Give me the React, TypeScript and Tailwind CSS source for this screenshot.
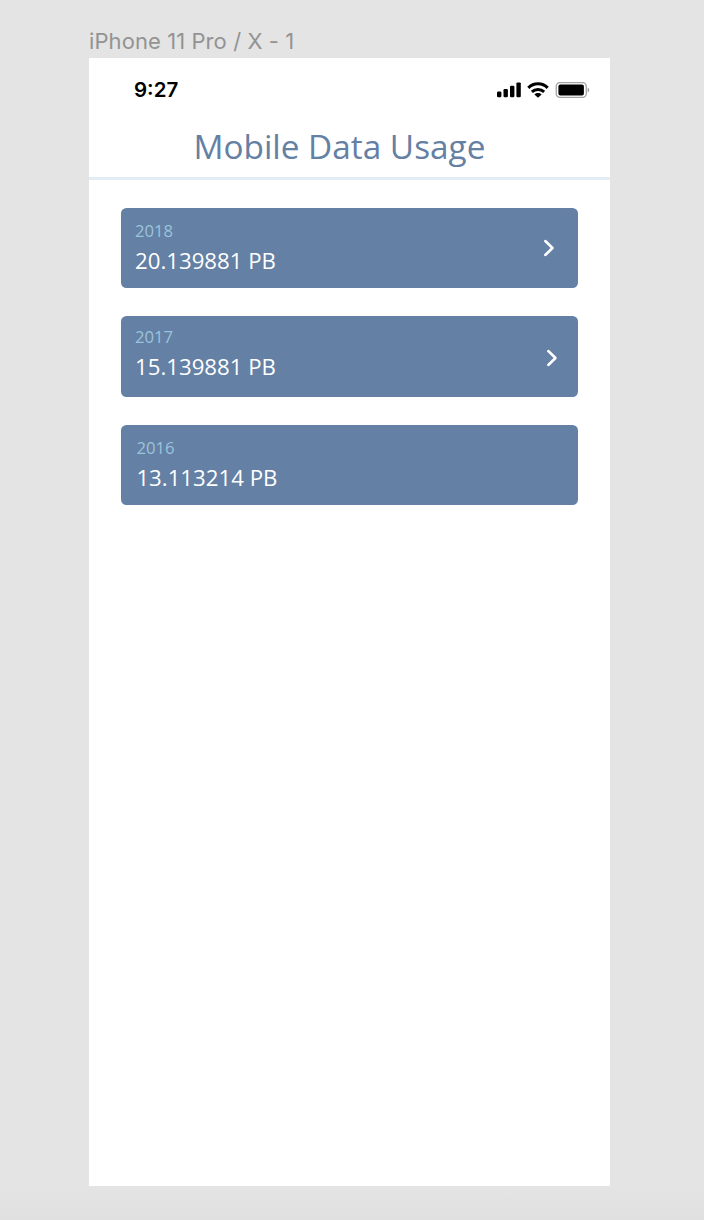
type Usage = {
  year: string;
  amount: string;
  body: string;
  arrow?: string;
};

const usages: Usage[] = [
  { year: "2018", amount: "20.139881 PB", body: "pl-[14px] pt-[11px]", arrow: "mt-[31px] mr-[23px]" },
  { year: "2017", amount: "15.139881 PB", body: "pl-[14px] pt-[8.6px]", arrow: "mt-[32.6px] mr-[20px]" },
  { year: "2016", amount: "13.113214 PB", body: "pl-[15.4px] pt-[11.2px]" },
];

function Signal() {
  return (
    <svg width="25" height="16" viewBox="0 0 25 16" fill="#000">
      <rect x="0" y="9.6" width="4.4" height="5.6" rx="1.2" />
      <rect x="6.5" y="7" width="4.4" height="8.2" rx="1.2" />
      <rect x="13" y="3.8" width="4.4" height="11.4" rx="1.2" />
      <rect x="19.4" y="0.4" width="4.4" height="14.8" rx="1.2" />
    </svg>
  );
}

function Wifi() {
  return (
    <svg width="22" height="16" viewBox="0 0 22 16" fill="none" stroke="#000" strokeWidth="3">
      <path d="M1.3 5.9C6.7.5 15.3.5 20.7 5.9" />
      <path d="M4.9 9.9C8.3 6.6 13.7 6.6 17.1 9.9" />
      <path d="M7.4 12.4C9.5 10.5 12.5 10.5 14.6 12.4L11 15.8Z" fill="#000" stroke="none" />
    </svg>
  );
}

function Battery() {
  return (
    <svg width="35" height="17" viewBox="0 0 35 17">
      <rect x="1.25" y="0.55" width="30" height="14.8" rx="3.6" fill="none" stroke="#a3a3a3" strokeWidth="1.3" />
      <rect x="3.4" y="2.6" width="25.5" height="10.8" rx="1.9" fill="#000" />
      <path d="M32.6 5.4C34.8 6.3 34.8 9.6 32.6 10.5Z" fill="#a3a3a3" />
    </svg>
  );
}

function UsageCard({ year, amount, body, arrow }: Usage) {
  return (
    <li className="flex h-[80.4px] items-start justify-between rounded-[5.5px] bg-[#6480a4]">
      <div className={body}>
        <p className="text-[16.67px] leading-[24px] text-[#9bc4dc]">{year}</p>
        <p className="mt-[3px] text-[22.22px] leading-[30px] text-white">{amount}</p>
      </div>
      {arrow && (
        <svg className={arrow} width="12" height="18" viewBox="0 0 12 18" fill="none" stroke="#fff" strokeWidth="2.5" strokeLinecap="round" strokeLinejoin="round">
          <path d="M2.3 2L9.5 9L2.3 16" />
        </svg>
      )}
    </li>
  );
}

export default function App() {
  return (
    <div className="flex h-[1220px] w-[704px] flex-col overflow-hidden bg-[linear-gradient(to_bottom,#e4e4e4_1185px,#e0e0e0_1220px)] pl-[89px]">
      <p className="h-[58px] pt-[27px] font-[Inter,sans-serif] text-[22px] leading-[28px] tracking-[0.08px] whitespace-nowrap text-[#939393]">
        iPhone 11 Pro / X - 1
      </p>
      <main className="h-[1128px] w-[521px] bg-white font-['Open_Sans',sans-serif]">
        <div className="flex h-[62px] items-start justify-between pt-[18px] pl-[45px]">
          <time className="font-[Inter,sans-serif] text-[20.5px] leading-[28px] font-semibold text-black">9:27</time>
          <div className="flex items-start pt-[6px] pr-[20px]">
            <Signal />
            <div className="ml-[5px]"><Wifi /></div>
            <div className="ml-[6px]"><Battery /></div>
          </div>
        </div>
        <header className="h-[60px] border-b-[3px] border-[#e2eef4] pl-[104.5px]">
          <h1 className="pt-[3px] text-[33.33px] leading-[46px] text-[#6480a4]">Mobile Data Usage</h1>
        </header>
        <ul className="flex flex-col gap-[28px] px-[32px] pt-[28px]">
          {usages.map((usage) => (
            <UsageCard key={usage.year} {...usage} />
          ))}
        </ul>
      </main>
    </div>
  );
}
